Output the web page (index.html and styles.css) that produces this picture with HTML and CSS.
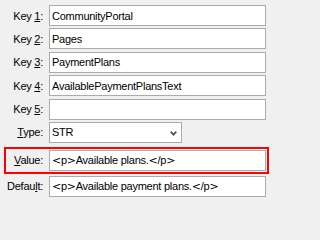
FILE: index.html
```html
<!DOCTYPE html>
<html>
<head>
<meta charset="utf-8">
<link rel="stylesheet" href="styles.css">
</head>
<body>
<div class="form">
  <div class="row"><label class="label">Key <u>1</u>:</label><input class="field" type="text" value="CommunityPortal"></div>
  <div class="row"><label class="label">Key <u>2</u>:</label><input class="field" type="text" value="Pages"></div>
  <div class="row"><label class="label">Key <u>3</u>:</label><input class="field" type="text" value="PaymentPlans"></div>
  <div class="row"><label class="label">Key <u>4</u>:</label><input class="field" type="text" value="AvailablePaymentPlansText"></div>
  <div class="row"><label class="label">Key <u>5</u>:</label><input class="field" type="text" value=""></div>
  <div class="row row-type"><label class="label"><u>T</u>ype:</label>
    <div class="select-wrap">
      <select class="field select"><option>STR</option></select>
      <svg class="chevron" width="7" height="5" viewBox="0 0 7 5"><polyline points="0.7,0.7 3.5,3.6 6.3,0.7" fill="none" stroke="#555" stroke-width="1.8"/></svg>
    </div>
  </div>
  <div class="row highlight"><label class="label label-inner"><u>V</u>alue:</label><div class="field text-field"><span class="br">&lt;</span>p<span class="br">&gt;</span>Available plans.<span class="br">&lt;</span>/p<span class="br">&gt;</span></div></div>
  <div class="row"><label class="label">Defau<u>l</u>t:</label><div class="field text-field"><span class="br">&lt;</span>p<span class="br">&gt;</span>Available payment plans.<span class="br">&lt;</span>/p<span class="br">&gt;</span></div></div>
</div>
</body>
</html>
```
FILE: styles.css
```css
html, body {
  margin: 0;
  background: #f0f0f0;
}
body {
  font-family: "Liberation Sans", Arial, sans-serif;
  font-size: 11px;
  letter-spacing: -0.25px;
  color: #000;
}
.form {
  display: flex;
  flex-direction: column;
  padding-top: 5px;
}
.row {
  display: flex;
  align-items: center;
  height: 21px;
  margin-bottom: 2.4px;
}
.label {
  width: 43px;
  margin-right: 6px;
  text-align: right;
  white-space: nowrap;
  color: #000;
}
.label u {
  text-underline-offset: 1px;
}
.field {
  width: 217px;
  height: 21px;
  box-sizing: border-box;
  margin: 0;
  padding: 0 2px;
  border: 1px solid #ababab;
  background: #fff;
  font: inherit;
  letter-spacing: inherit;
  color: #000;
  outline: none;
  border-radius: 0;
}
.text-field {
  display: flex;
  align-items: center;
  white-space: pre;
  overflow: hidden;
}
.br {
  font-family: "DejaVu Sans", sans-serif;
  letter-spacing: -0.3px;
}
.row-type {
  margin-bottom: 4px;
}
.select-wrap {
  position: relative;
  width: 133px;
  height: 21px;
}
.select {
  width: 133px;
  -webkit-appearance: none;
  appearance: none;
  padding-left: 2px;
}
.chevron {
  position: absolute;
  left: 121px;
  top: 9px;
}
.highlight {
  height: 21px;
  margin-left: 4px;
  margin-bottom: 2px;
  padding: 1px 1px 1px 0;
  border: 2px solid #f00;
  align-self: flex-start;
}
.label-inner {
  width: 37px;
}
```
